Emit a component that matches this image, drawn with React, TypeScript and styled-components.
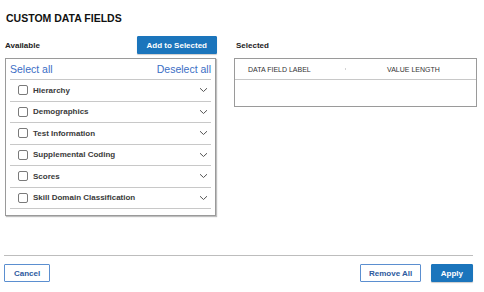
import { createGlobalStyle, styled } from "styled-components";

const GlobalStyle = createGlobalStyle`
  html, body {
    margin: 0;
    padding: 0;
    background: #fff;
  }
  body {
    font-family: "Liberation Sans", Arial, sans-serif;
    color: #222;
  }
`;

const Page = styled.div`
  height: 292px;
  box-sizing: border-box;
  padding: 11px 8px 10px 4px;
  display: flex;
  flex-direction: column;
`;

const Title = styled.h1`
  margin: 0 0 11px 2px;
  font-size: 10.5px;
  line-height: 14px;
  font-weight: 700;
  color: #111;
`;

const Columns = styled.div`
  display: grid;
  grid-template-columns: 212px 243px;
  column-gap: 17px;
  margin-left: 1px;
`;

const Column = styled.div`
  display: flex;
  flex-direction: column;
`;

const ColumnHead = styled.div`
  height: 18px;
  display: flex;
  justify-content: space-between;
  align-items: flex-end;
  margin-bottom: 4px;
`;

const Label = styled.span<{ $indent?: number }>`
  font-size: 8px;
  line-height: 10px;
  font-weight: 700;
  color: #222;
  margin: 0 0 3px ${(p) => p.$indent ?? 0}px;
`;

const Button = styled.button<{ $primary?: boolean; $pad?: number }>`
  height: 18px;
  padding: 0 ${(p) => p.$pad ?? 9}px;
  border: 1px solid ${(p) => (p.$primary ? "#1b75bc" : "#5b8fd0")};
  border-radius: 1px;
  background: ${(p) => (p.$primary ? "#1b75bc" : "#fff")};
  color: ${(p) => (p.$primary ? "#fff" : "#2d5a9e")};
  font-family: inherit;
  font-size: 8px;
  font-weight: 700;
  cursor: pointer;
  box-shadow: ${(p) => (p.$primary ? "0 1px 1px rgba(0,0,0,0.2)" : "none")};
`;

const ListBox = styled.div`
  width: 211px;
  height: 158px;
  box-sizing: border-box;
  border: 1px solid #9a9a9a;
  box-shadow: 1px 1px 1px rgba(0, 0, 0, 0.25);
  padding: 0 4px 6px;
`;

const SelectBar = styled.div`
  height: 20px;
  border-bottom: 1px solid #c8c8c8;
  display: flex;
  justify-content: space-between;
  align-items: center;
`;

const LinkText = styled.a`
  font-size: 10.5px;
  line-height: 20px;
  color: #3b6ec5;
  text-decoration: none;
  cursor: pointer;
`;

const FieldRow = styled.div`
  height: 20.5px;
  border-bottom: 1px solid #c8c8c8;
  display: flex;
  align-items: center;
  padding: 0 3px 0 8px;
`;

const CheckBox = styled.span`
  width: 10px;
  height: 10px;
  box-sizing: border-box;
  border: 1px solid #7a7a7a;
  border-radius: 2px;
  margin-right: 5px;
  flex: none;
`;

const FieldName = styled.span`
  flex: 1;
  font-size: 8px;
  font-weight: 700;
  color: #3a3a3a;
`;

const Table = styled.div`
  border: 1px solid #9a9a9a;
`;

const TableHead = styled.div`
  height: 20px;
  border-bottom: 1px solid #c8c8c8;
  display: grid;
  grid-template-columns: 110px 1px 1fr;
  align-items: center;
`;

const HeadCell = styled.span<{ $pad: number }>`
  padding-left: ${(p) => p.$pad}px;
  font-size: 7px;
  color: #333;
  text-transform: uppercase;
`;

const ColSep = styled.span`
  width: 1px;
  height: 2px;
  background: #d4d4d4;
`;

const TableBody = styled.div`
  height: 26px;
`;

const Footer = styled.div`
  margin-top: auto;
  margin-right: 3px;
  border-top: 1px solid #bdbdbd;
  padding-top: 8px;
  display: flex;
  align-items: center;
  gap: 10px;
`;

const Spacer = styled.div`
  flex: 1;
`;

function Chevron() {
  return (
    <svg width="9" height="6" viewBox="0 0 9 6">
      <polyline
        points="1,1.2 4.5,4.5 8,1.2"
        fill="none"
        stroke="#555"
        strokeWidth="1"
      />
    </svg>
  );
}

const fields = [
  "Hierarchy",
  "Demographics",
  "Test Information",
  "Supplemental Coding",
  "Scores",
  "Skill Domain Classification",
];

export default function App() {
  return (
    <>
      <GlobalStyle />
      <Page>
        <Title>CUSTOM DATA FIELDS</Title>
        <Columns>
          <Column>
            <ColumnHead>
              <Label>Available</Label>
              <Button $primary>Add to Selected</Button>
            </ColumnHead>
            <ListBox>
              <SelectBar>
                <LinkText>Select all</LinkText>
                <LinkText>Deselect all</LinkText>
              </SelectBar>
              {fields.map((f) => (
                <FieldRow key={f}>
                  <CheckBox />
                  <FieldName>{f}</FieldName>
                  <Chevron />
                </FieldRow>
              ))}
            </ListBox>
          </Column>
          <Column>
            <ColumnHead>
              <Label $indent={2}>Selected</Label>
            </ColumnHead>
            <Table>
              <TableHead>
                <HeadCell $pad={13}>Data Field Label</HeadCell>
                <ColSep />
                <HeadCell $pad={41}>Value Length</HeadCell>
              </TableHead>
              <TableBody />
            </Table>
          </Column>
        </Columns>
        <Footer>
          <Button>Cancel</Button>
          <Spacer />
          <Button $pad={7.5}>Remove All</Button>
          <Button $primary>Apply</Button>
        </Footer>
      </Page>
    </>
  );
}
